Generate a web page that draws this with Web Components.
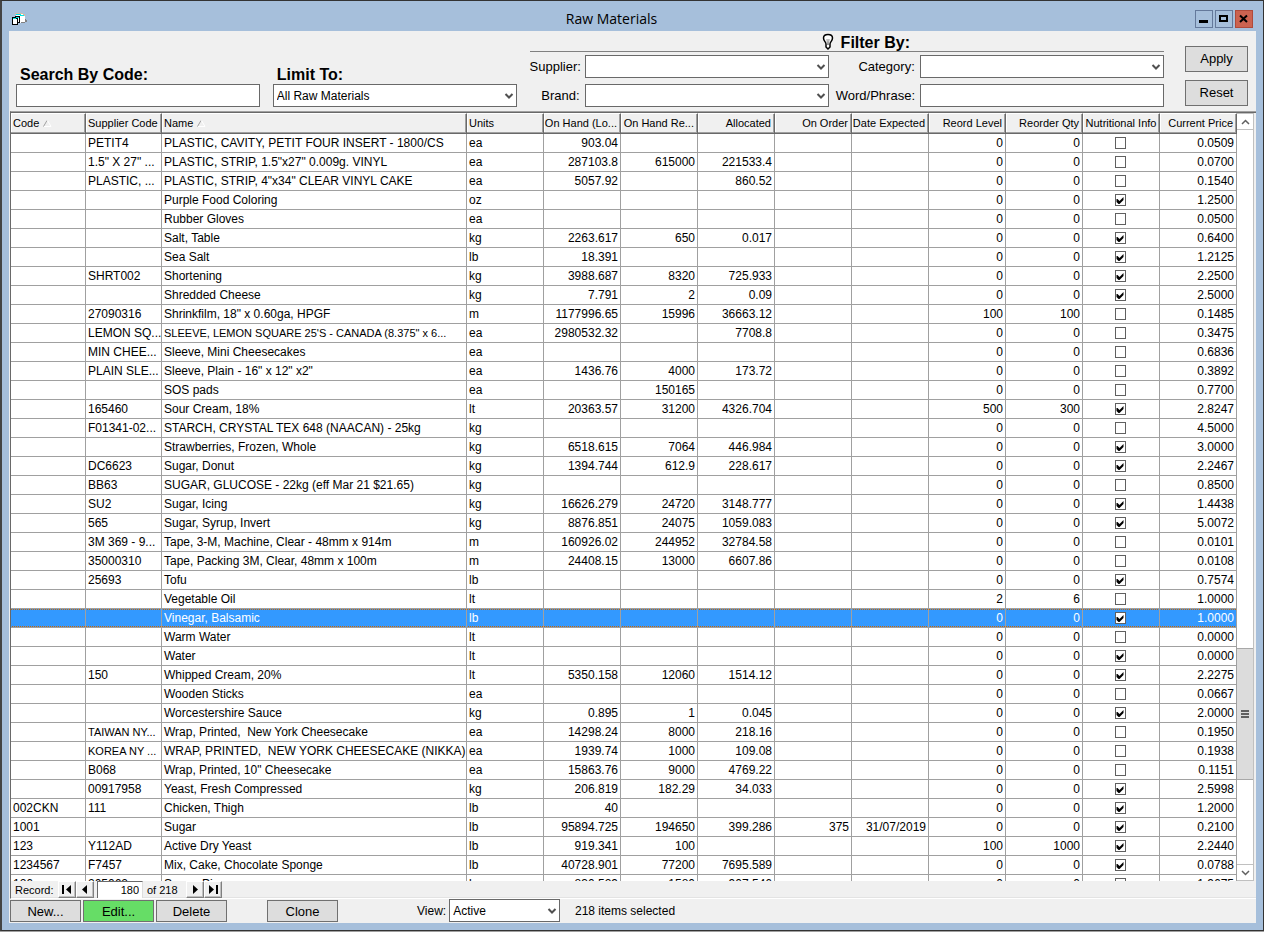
<!DOCTYPE html>
<html lang="en">
<head>
<meta charset="utf-8">
<title>Raw Materials</title>
<style>
html, body {
    margin: 0;
    height: 100%;
}
body {
    background: #a0a0a0;
    font: 12px/18px "Liberation Sans", Arial, sans-serif;
    color: #000;
    overflow: hidden;
}
</style>
</head>
<body>
<materials-screen></materials-screen>

<script>
const controlStyle = `
:host, * { box-sizing: border-box; }
input, select, button {
    font: inherit;
    color: inherit;
    margin: 0;
    border-radius: 0;
    outline: none;
}
`

class FormField extends HTMLElement {
    constructor() {
        super()
        this._shadowRoot = this.attachShadow({ mode: 'open' })
    }
    connectedCallback() {
        const label = this.getAttribute('label')
        const options = this.getAttribute('options')
        const isSelect = this.getAttribute('type') === 'select'
        const control = isSelect
            ? `<select id="control"><option>${options || ''}</option></select>
               <svg width="10" height="7" viewBox="0 0 10 7"><path d="M1.5 1 L5 4.5 L8.5 1" fill="none" stroke="#505050" stroke-width="2"/></svg>`
            : `<input id="control" type="text">`
        this._shadowRoot.innerHTML = `
        <style>
        ${controlStyle}
        :host {
            display: flex;
            align-items: center;
            gap: 5px;
        }
        :host([stacked]) {
            flex-direction: column;
            align-items: stretch;
            gap: 0;
        }
        label {
            flex: none;
            width: var(--label-width, auto);
            text-align: right;
            font-size: 13px;
            white-space: nowrap;
        }
        :host([small]) { gap: 3px; }
        :host([small]) label { font-size: 12px; }
        :host([stacked]) label {
            text-align: left;
            font-size: 16px;
            font-weight: bold;
            padding-left: 4px;
        }
        .box {
            flex: 1;
            min-width: 0;
            position: relative;
        }
        input, select {
            display: block;
            width: 100%;
            height: 23px;
            background: #fff;
            border: 1px solid #696969;
            padding: 0 3px;
            appearance: none;
        }
        svg {
            position: absolute;
            right: 3px;
            top: 9px;
            pointer-events: none;
        }
        </style>
        <label for="control">${label}</label>
        <div class="box">${control}</div>
        `
    }
}
window.customElements.define('form-field', FormField)

class PushButton extends HTMLElement {
    constructor() {
        super()
        this._shadowRoot = this.attachShadow({ mode: 'open' })
        this._shadowRoot.innerHTML = `
        <style>
        ${controlStyle}
        :host { display: block; width: 71px; height: 22px; }
        button {
            width: 100%;
            height: 100%;
            padding: 0;
            font-size: 13px;
            background: #ddd;
            border: 1px solid #707070;
        }
        :host([primary]) button { background: #66dd66; }
        </style>
        <button type="button"><slot></slot></button>
        `
    }
}
window.customElements.define('push-button', PushButton)

class TitleBar extends HTMLElement {
    constructor() {
        super()
        this._shadowRoot = this.attachShadow({ mode: 'open' })
        this._shadowRoot.innerHTML = `
        <style>
        ${controlStyle}
        :host {
            display: flex;
            align-items: center;
            height: 30px;
            padding: 6px 3px 0 3px;
        }
        h1 {
            flex: 1;
            margin: 0;
            text-align: center;
            font: 14px/20px "Open Sans", "Noto Sans", sans-serif;
        }
        .icon { display: block; }
        .buttons {
            display: flex;
            gap: 2px;
        }
        button {
            display: block;
            width: 18px;
            height: 18px;
            padding: 0;
            background: #a6bfdb;
            border: 1px solid #64799b;
        }
        button.close { background: #cc6350; border-color: #b04a3a; }
        button svg { display: block; }
        </style>
        <svg class="icon" width="16" height="13" viewBox="0 0 16 13" shape-rendering="crispEdges">
            <path d="M4 1h7l2 2v7H5z" fill="#fff"/>
            <path d="M3 0h8v1H3zM11 1h2v2h-2z" fill="#d8b8a0"/>
            <path d="M4 1h5v1H4zM8 2h4v1H8z" fill="#00e5e5"/>
            <path d="M13 6h1v1h1v2h-2v1h-4V9h4z" fill="#808080"/>
            <path d="M0 4h3V3h5v7H6v2H0z" fill="#000"/>
            <path d="M1 6h4v5H1zM6 5h1v4H6z" fill="#fff"/>
            <path d="M1 5h3v1H1zM4 4h3v1H4z" fill="#00e5e5"/>
        </svg>
        <h1>Raw Materials</h1>
        <div class="buttons">
            <button type="button" aria-label="Minimize"><svg width="16" height="16"><path d="M3 9h9v3H3z"/></svg></button>
            <button type="button" aria-label="Maximize"><svg width="16" height="16"><path d="M4 5h7v5H4z" fill="none" stroke="#000" stroke-width="2"/></svg></button>
            <button type="button" class="close" aria-label="Close"><svg width="16" height="16"><path d="M4 4.500l7 6.500M11 4.500L4 11" fill="none" stroke="#000" stroke-width="2"/></svg></button>
        </div>
        `
    }
}
window.customElements.define('title-bar', TitleBar)

class FilterPanel extends HTMLElement {
    constructor() {
        super()
        this._shadowRoot = this.attachShadow({ mode: 'open' })
        this._shadowRoot.innerHTML = `
        <style>
        :host {
            display: flex;
            align-items: flex-end;
            padding: 1px 8px 4px 7px;
            gap: 13px;
        }
        .search { flex: 244 1 0; }
        .filters { flex: 635 1 0; }
        .filters h2 {
            display: flex;
            justify-content: center;
            gap: 6px;
            margin: 0 0 3px;
            padding: 3px 0 0 37px;
            font-size: 16px;
            line-height: 16px;
            border-bottom: 1px solid #808080;
        }
        .filters svg { margin-top: -2px; }
        .fields {
            display: grid;
            grid-template-columns: 299fr 328fr;
            gap: 6px 7px;
        }
        .left { --label-width: 50px; }
        .right { --label-width: 79px; }
        .actions {
            display: flex;
            flex-direction: column;
            gap: 8px;
            padding: 0 0 1px 8px;
        }
        .actions push-button { width: 63px; height: 26px; }
        </style>
        <form-field class="search" stacked label="Search By Code:"></form-field>
        <form-field class="search" stacked type="select" label="Limit To:" options="All Raw Materials"></form-field>
        <div class="filters">
            <h2>
                <svg width="14" height="18" viewBox="0 0 14 18">
                    <path d="M5 11 C5 9 2.500 8 2.500 5 C2.500 2.500 4.500 1.500 7 1.500 C9.500 1.500 11.500 2.500 11.500 5 C11.500 8 9 9 9 11 V14 L7 16 L5 14 Z" fill="#fff" stroke="#000" stroke-width="1.500"/>
                    <path d="M6 6 L6.500 12 M8 6 L7.500 12" fill="none" stroke="#909090"/>
                </svg>
                Filter By:
            </h2>
            <div class="fields">
                <form-field class="left" type="select" label="Supplier:"></form-field>
                <form-field class="right" type="select" label="Category:"></form-field>
                <form-field class="left" type="select" label="Brand:"></form-field>
                <form-field class="right" label="Word/Phrase:"></form-field>
            </div>
        </div>
        <div class="actions">
            <push-button>Apply</push-button>
            <push-button>Reset</push-button>
        </div>
        `
    }
}
window.customElements.define('filter-panel', FilterPanel)

const columns = [
    { title: 'Code', width: 75, sort: true },
    { title: 'Supplier Code', width: 76 },
    { title: 'Name', sort: true },
    { title: 'Units', width: 77 },
    { title: 'On Hand (Lo...', width: 77, num: true },
    { title: 'On Hand Re...', width: 77, num: true },
    { title: 'Allocated', width: 77, num: true },
    { title: 'On Order', width: 77, num: true },
    { title: 'Date Expected', width: 77, num: true },
    { title: 'Reord Level', width: 77, num: true },
    { title: 'Reorder Qty', width: 77, num: true },
    { title: 'Nutritional Info', width: 77, check: true },
    { title: 'Current Price', width: 77, num: true }
]

// code | supplier code | name | units | on hand | on hand re | allocated | on order | date | level | qty | info | price
const rows = `
|PETIT4|PLASTIC, CAVITY, PETIT FOUR INSERT - 1800/CS|ea|903.04|||||0|0||0.0509
|1.5" X 27" ...|PLASTIC, STRIP, 1.5"x27" 0.009g. VINYL|ea|287103.8|615000|221533.4|||0|0||0.0700
|PLASTIC, ...|PLASTIC, STRIP, 4"x34" CLEAR VINYL CAKE|ea|5057.92||860.52|||0|0||0.1540
||Purple Food Coloring|oz||||||0|0|x|1.2500
||Rubber Gloves|ea||||||0|0||0.0500
||Salt, Table|kg|2263.617|650|0.017|||0|0|x|0.6400
||Sea Salt|lb|18.391|||||0|0|x|1.2125
|SHRT002|Shortening|kg|3988.687|8320|725.933|||0|0|x|2.2500
||Shredded Cheese|kg|7.791|2|0.09|||0|0|x|2.5000
|27090316|Shrinkfilm, 18" x 0.60ga, HPGF|m|1177996.65|15996|36663.12|||100|100||0.1485
|LEMON SQ...|SLEEVE, LEMON SQUARE 25'S - CANADA (8.375" x 6...|ea|2980532.32||7708.8|||0|0||0.3475
|MIN CHEE...|Sleeve, Mini Cheesecakes|ea||||||0|0||0.6836
|PLAIN SLE...|Sleeve, Plain - 16" x 12" x2"|ea|1436.76|4000|173.72|||0|0||0.3892
||SOS pads|ea||150165||||0|0||0.7700
|165460|Sour Cream, 18%|lt|20363.57|31200|4326.704|||500|300|x|2.8247
|F01341-02...|STARCH, CRYSTAL TEX 648 (NAACAN) - 25kg|kg||||||0|0||4.5000
||Strawberries, Frozen, Whole|kg|6518.615|7064|446.984|||0|0|x|3.0000
|DC6623|Sugar, Donut|kg|1394.744|612.9|228.617|||0|0|x|2.2467
|BB63|SUGAR, GLUCOSE - 22kg (eff Mar 21 $21.65)|kg||||||0|0||0.8500
|SU2|Sugar, Icing|kg|16626.279|24720|3148.777|||0|0|x|1.4438
|565|Sugar, Syrup, Invert|kg|8876.851|24075|1059.083|||0|0|x|5.0072
|3M 369 - 9...|Tape, 3-M, Machine, Clear - 48mm x 914m|m|160926.02|244952|32784.58|||0|0||0.0101
|35000310|Tape, Packing 3M, Clear, 48mm x 100m|m|24408.15|13000|6607.86|||0|0||0.0108
|25693|Tofu|lb||||||0|0|x|0.7574
||Vegetable Oil|lt||||||2|6||1.0000
||Vinegar, Balsamic|lb||||||0|0|x|1.0000
||Warm Water|lt||||||0|0||0.0000
||Water|lt||||||0|0|x|0.0000
|150|Whipped Cream, 20%|lt|5350.158|12060|1514.12|||0|0|x|2.2275
||Wooden Sticks|ea||||||0|0||0.0667
||Worcestershire Sauce|kg|0.895|1|0.045|||0|0|x|2.0000
|TAIWAN NY...|Wrap, Printed,  New York Cheesecake|ea|14298.24|8000|218.16|||0|0||0.1950
|KOREA NY ...|WRAP, PRINTED,  NEW YORK CHEESECAKE (NIKKA)|ea|1939.74|1000|109.08|||0|0||0.1938
|B068|Wrap, Printed, 10" Cheesecake|ea|15863.76|9000|4769.22|||0|0||0.1151
|00917958|Yeast, Fresh Compressed|kg|206.819|182.29|34.033|||0|0|x|2.5998
002CKN|111|Chicken, Thigh|lb|40|||||0|0|x|1.2000
1001||Sugar|lb|95894.725|194650|399.286|375|31/07/2019|0|0|x|0.2100
123|Y112AD|Active Dry Yeast|lb|919.341|100||||100|1000|x|2.2440
1234567|F7457|Mix, Cake, Chocolate Sponge|lb|40728.901|77200|7695.589|||0|0|x|0.0788
126|205062|Sugar, Pie|kg|830.529|1580|907.546|||0|0||1.9675
`.trim().split('\n').map(line => line.split('|'))

const selectedRow = 25

class MaterialsGrid extends HTMLElement {
    constructor() {
        super()
        this._shadowRoot = this.attachShadow({ mode: 'open' })
    }
    cell(value, i, name) {
        const col = columns[i]
        if (col.check) {
            return `<td class="check"><input type="checkbox" aria-label="Nutritional info: ${name.replace(/"/g, '&quot;')}" ${value ? 'checked' : ''}></td>`
        }
        return `<td class="${col.num ? 'num' : ''}">${value}</td>`
    }
    // long texts get the smaller size so that they stay inside their column
    fitTexts() {
        this._shadowRoot.querySelectorAll('td').forEach(td => {
            if (td.scrollWidth > td.clientWidth) td.classList.add('tight')
        })
    }
    connectedCallback() {
        const cols = columns.map(c => `<col ${c.width ? `style="width:${c.width}px"` : ''}>`).join('')
        const arrow = '<svg width="9" height="7" viewBox="0 0 9 7"><path d="M.5 6.500 L4 .5" stroke="#a0a0a0" fill="none"/><path d="M4.500 .5 L8 6.500 H1" stroke="#fff" fill="none"/></svg>'
        const head = columns.map(c => `<th scope="col" class="${c.num ? 'num' : ''}${c.check ? 'check' : ''}">${c.title}${c.sort ? arrow : ''}</th>`).join('')
        const body = rows.map((r, n) => `<tr class="${n === selectedRow ? 'selected' : ''}">${r.map((v, i) => this.cell(v, i, r[2])).join('')}</tr>`).join('')

        this._shadowRoot.innerHTML = `
        <style>
        :host {
            display: block;
            min-width: 0;
            overflow: hidden;
        }
        table {
            width: 100%;
            table-layout: fixed;
            border-collapse: separate;
            border-spacing: 0;
            background: #fff;
        }
        th, td {
            box-sizing: border-box;
            text-align: left;
            font-weight: normal;
            white-space: pre;
            overflow: hidden;
        }
        th {
            height: 21px;
            padding: 0 2px 2px;
            font-size: 11px;
            line-height: 16px;
            background: #f0f0f0;
            border-top: 1px solid #fff;
            border-right: 1px solid #696969;
            border-bottom: 1px solid #696969;
            box-shadow: inset -1px -1px #a0a0a0, inset 1px 0 #fff;
        }
        th svg { margin-left: 4px; }
        td {
            height: 19px;
            padding: 0 0 0 2px;
            line-height: 18px;
            border-right: 1px solid #a0a0a0;
            border-bottom: 1px solid #a0a0a0;
        }
        td.tight { font-size: 11px; }
        .num { text-align: right; }
        td.num { padding: 0 2px 0 0; }
        th.num { padding: 0 3px 2px 0; }
        .check { text-align: center; }
        td.check { padding: 0 2px 0 0; }
        .selected {
            color: #fff;
            background-color: #3399ff;
            background-image: linear-gradient(90deg, #cc6600 50%, transparent 50%), linear-gradient(90deg, #cc6600 50%, transparent 50%);
            background-size: 2px 1px;
            background-position: left top, left 1px bottom 1px;
            background-repeat: repeat-x;
        }
        input {
            appearance: none;
            display: block;
            box-sizing: border-box;
            width: 11px;
            height: 12px;
            margin: 0 auto;
            background: #fff;
            border: 1px solid #606060;
        }
        input:checked::before {
            content: "";
            display: block;
            width: 9px;
            height: 10px;
            background: #000;
            clip-path: polygon(1px 4px, 2px 4px, 4px 6px, 8px 2px, 8px 5px, 4px 9px, 3px 9px, 1px 7px);
        }
        </style>
        <table>
            <colgroup>${cols}</colgroup>
            <thead><tr>${head}</tr></thead>
            <tbody>${body}</tbody>
        </table>
        `
    }
}
window.customElements.define('materials-grid', MaterialsGrid)

class GridScrollbar extends HTMLElement {
    constructor() {
        super()
        this._shadowRoot = this.attachShadow({ mode: 'open' })
        this._shadowRoot.innerHTML = `
        <style>
        :host {
            display: flex;
            flex-direction: column;
            width: 17px;
            box-sizing: border-box;
            background: #fff;
            border: 1px solid #c0c0c0;
            border-left: 0;
        }
        button {
            display: block;
            flex: none;
            height: 16px;
            padding: 0;
            background: #fff;
            border: 0 solid #c0c0c0;
        }
        .up { border-bottom-width: 1px; }
        .down { border-top-width: 1px; }
        svg { display: block; margin: 0 auto; }
        .track { flex: 1; display: flex; flex-direction: column; }
        .before { flex: 519; }
        .after { flex: 84; }
        .thumb {
            flex: 131;
            display: flex;
            align-items: center;
            background: #dcdcdc;
            border: 1px solid #a8a8a8;
            border-width: 1px 0;
        }
        </style>
        <button type="button" class="up" aria-label="Scroll up"><svg width="9" height="6"><path d="M1 5 L4.500 1.500 L8 5" fill="none" stroke="#606060" stroke-width="1.500"/></svg></button>
        <div class="track">
            <div class="before"></div>
            <div class="thumb"><svg width="8" height="8"><path d="M0 0h8v2H0zM0 3h8v2H0zM0 6h8v2H0z" fill="#606060"/></svg></div>
            <div class="after"></div>
        </div>
        <button type="button" class="down" aria-label="Scroll down"><svg width="9" height="6"><path d="M1 1 L4.500 4.500 L8 1" fill="none" stroke="#606060" stroke-width="1.500"/></svg></button>
        `
    }
}
window.customElements.define('grid-scrollbar', GridScrollbar)

class RecordNavigator extends HTMLElement {
    constructor() {
        super()
        this._shadowRoot = this.attachShadow({ mode: 'open' })
        this._shadowRoot.innerHTML = `
        <style>
        ${controlStyle}
        :host {
            display: flex;
            align-items: center;
            height: 17px;
            padding-left: 4px;
            font-size: 11px;
        }
        button {
            width: 18px;
            height: 17px;
            padding: 0;
            background: #f0f0f0;
            border: 1px solid;
            border-color: #fff #808080 #808080 #fff;
            box-shadow: inset -1px -1px #c0c0c0;
        }
        button svg { display: block; margin: 0 auto; }
        input {
            width: 46px;
            height: 17px;
            margin: 0 4px 0 3px;
            padding: 0 3px;
            text-align: right;
            background: #fff;
            border: 1px solid #696969;
            border-right-color: #ddd;
            border-bottom: 0;
        }
        label { width: 43px; }
        .total { width: 39px; }
        </style>
        <label for="record">Record:</label>
        <button type="button" aria-label="First record"><svg width="12" height="9"><path d="M1 0h2v9H1zM10 0v9L5 4.500z"/></svg></button>
        <button type="button" aria-label="Previous record"><svg width="12" height="9"><path d="M8 0v9L3 4.500z"/></svg></button>
        <input id="record" type="text" value="180">
        <span class="total">of 218</span>
        <button type="button" aria-label="Next record"><svg width="12" height="9"><path d="M4 0v9L9 4.500z"/></svg></button>
        <button type="button" aria-label="Last record"><svg width="12" height="9"><path d="M9 0h2v9H9zM2 0v9L7 4.500z"/></svg></button>
        `
    }
}
window.customElements.define('record-navigator', RecordNavigator)

class MaterialsScreen extends HTMLElement {
    constructor() {
        super()
        this._shadowRoot = this.attachShadow({ mode: 'open' })
    }
    connectedCallback() {
        this._shadowRoot.innerHTML = `
        <style>
        :host {
            display: flex;
            flex-direction: column;
            box-sizing: border-box;
            height: calc(100vh - 1px);
            padding: 0 7px 7px;
            background: #a6bfdb;
            border: 1px solid #333;
            border-left: 2px solid #444;
        }
        .client {
            flex: 1;
            min-height: 0;
            display: flex;
            flex-direction: column;
            background: #f0f0f0;
        }
        .frame {
            flex: 1;
            min-height: 0;
            display: flex;
            flex-direction: column;
            margin: 0 0 0 1px;
            border-top: 1px solid #a0a0a0;
            border-left: 1px solid #696969;
            border-bottom: 1px solid #fff;
            box-shadow: inset 0 -1px #e3e3e3;
        }
        .grid {
            flex: 1;
            min-height: 0;
            display: flex;
            border-top: 1px solid #696969;
            padding-right: 2px;
        }
        materials-grid { flex: 1; }
        .footer {
            display: flex;
            align-items: flex-end;
            box-sizing: border-box;
            height: 24px;
            padding: 0 0 1px 1px;
            line-height: 22px;
        }
        .footer push-button { margin-right: 2px; }
        .footer .clone { margin: 0 79px 0 38px; }
        .footer form-field { width: 143px; margin-right: 15px; }
        </style>
        <title-bar></title-bar>
        <div class="client">
            <filter-panel></filter-panel>
            <div class="frame">
                <div class="grid">
                    <materials-grid></materials-grid>
                    <grid-scrollbar></grid-scrollbar>
                </div>
                <record-navigator></record-navigator>
            </div>
            <div class="footer">
                <push-button>New...</push-button>
                <push-button primary>Edit...</push-button>
                <push-button>Delete</push-button>
                <push-button class="clone">Clone</push-button>
                <form-field small type="select" label="View:" options="Active"></form-field>
                <span>218 items selected</span>
            </div>
        </div>
        `
        this._shadowRoot.querySelector('materials-grid').fitTexts()
    }
}
window.customElements.define('materials-screen', MaterialsScreen)
</script>
</body>
</html>
